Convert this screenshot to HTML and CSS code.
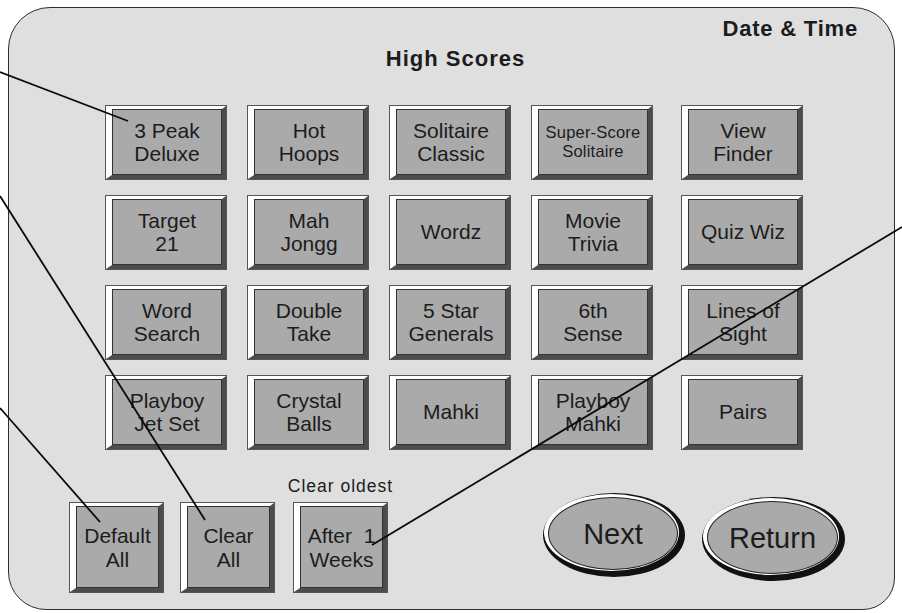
FILE: index.html
```html
<!DOCTYPE html>
<html>
<head>
<meta charset="utf-8">
<title>High Scores</title>
<link rel="stylesheet" href="styles.css">
</head>
<body>
<div class="screen">
  <div class="panel">
    <div class="topbar"><span class="datetime">Date &amp; Time</span></div>
    <div class="title">High Scores</div>
    <div class="grid">
      <div class="key"><div class="face">3 Peak<br>Deluxe</div></div>
      <div class="key"><div class="face">Hot<br>Hoops</div></div>
      <div class="key"><div class="face">Solitaire<br>Classic</div></div>
      <div class="key"><div class="face small">Super-Score<br>Solitaire</div></div>
      <div class="key"><div class="face">View<br>Finder</div></div>

      <div class="key"><div class="face">Target<br>21</div></div>
      <div class="key"><div class="face">Mah<br>Jongg</div></div>
      <div class="key"><div class="face">Wordz</div></div>
      <div class="key"><div class="face">Movie<br>Trivia</div></div>
      <div class="key"><div class="face">Quiz Wiz</div></div>

      <div class="key"><div class="face">Word<br>Search</div></div>
      <div class="key"><div class="face">Double<br>Take</div></div>
      <div class="key"><div class="face">5 Star<br>Generals</div></div>
      <div class="key"><div class="face">6th<br>Sense</div></div>
      <div class="key"><div class="face">Lines of<br>Sight</div></div>

      <div class="key"><div class="face">Playboy<br>Jet Set</div></div>
      <div class="key"><div class="face">Crystal<br>Balls</div></div>
      <div class="key"><div class="face">Mahki</div></div>
      <div class="key"><div class="face">Playboy<br>Mahki</div></div>
      <div class="key"><div class="face">Pairs</div></div>
    </div>
    <div class="bottom">
      <div class="key sq"><div class="face tall">Default<br>All</div></div>
      <div class="key sq"><div class="face tall">Clear<br>All</div></div>
      <div class="labelled">
        <div class="label">Clear oldest</div>
        <div class="key sq"><div class="face tall">After&nbsp;&nbsp;1<br>Weeks</div></div>
      </div>
      <div class="oval next"><div class="ovring"><div class="ovface">Next</div></div></div>
      <div class="oval ret"><div class="ovring"><div class="ovface">Return</div></div></div>
    </div>
  </div>
  <svg class="leaders" width="902" height="613" viewBox="0 0 902 613">
    <line x1="0" y1="72" x2="128" y2="121"/>
    <line x1="0" y1="196" x2="205" y2="520"/>
    <line x1="0" y1="408" x2="100" y2="522"/>
    <line x1="902" y1="227" x2="372" y2="545"/>
  </svg>
</div>
</body>
</html>
```

FILE: styles.css
```css
html, body {
  margin: 0;
  padding: 0;
  background: #ffffff;
}

body {
  font-family: "Liberation Sans", Arial, sans-serif;
  color: #1c1c1c;
}

.screen {
  position: relative;
  width: 902px;
  height: 613px;
  overflow: hidden;
}

.panel {
  box-sizing: border-box;
  margin: 7px 0 0 8px;
  width: 887px;
  height: 603px;
  border: 1.5px solid #2e2e2e;
  border-radius: 42px 42px 32px 38px;
  background: #dfdfdf;
  display: flex;
  flex-direction: column;
}

.topbar {
  display: flex;
  justify-content: flex-end;
  padding: 8px 36px 0 0;
}

.datetime {
  font-weight: bold;
  font-size: 22px;
  line-height: 26px;
  letter-spacing: 0.8px;
}

.title {
  font-weight: bold;
  font-size: 22px;
  line-height: 26px;
  letter-spacing: 1px;
  text-align: center;
  margin: 4px 0 0 8px;
}

.grid {
  display: grid;
  grid-template-columns: 142px 142px 142px 150px 122px;
  grid-auto-rows: 75px;
  row-gap: 15px;
  margin: 33px 0 0 96px;
}

.key {
  box-sizing: border-box;
  width: 122px;
  height: 75px;
  border: 1px solid #555555;
  background: #aaaaaa;
}

.face {
  box-sizing: border-box;
  height: 100%;
  border-style: solid;
  border-width: 3px 4px 4px 6px;
  border-color: #ffffff #4c4c4c #4c4c4c #ffffff;
  box-shadow: inset 0 0 0 1px #333333;
  display: flex;
  align-items: center;
  justify-content: center;
  text-align: center;
  font-size: 21px;
  line-height: 23px;
  padding-bottom: 1px;
}

.face.small {
  font-size: 16.5px;
  line-height: 19px;
  letter-spacing: 0.2px;
}

.bottom {
  display: flex;
  align-items: flex-start;
  margin: 26px 0 0 60px;
}

.key.sq {
  width: 95px;
  height: 91px;
  margin-top: 26px;
  margin-right: 16px;
}

.face.tall {
  line-height: 24px;
  padding-top: 3px;
}

.labelled {
  width: 95px;
  display: flex;
  flex-direction: column;
  align-items: center;
  margin-left: 2px;
}

.labelled .label {
  font-size: 17.5px;
  line-height: 20px;
  letter-spacing: 1px;
  white-space: nowrap;
  margin-bottom: 6px;
}

.labelled .key.sq {
  margin: 0;
}

.oval {
  box-sizing: border-box;
  width: 142px;
  height: 84px;
  border-radius: 50%;
  background: #111111;
  padding: 1px 6px 6px 1px;
}

.oval.next {
  margin: 17px 0 0 155px;
}

.oval.ret {
  width: 143px;
  margin: 21px 0 0 17px;
}

.ovring {
  box-sizing: border-box;
  height: 100%;
  border-radius: 50%;
  background: #ffffff;
  padding: 3px 1px 1px 4px;
}

.ovface {
  box-sizing: border-box;
  height: 100%;
  border-radius: 50%;
  background: #aaaaaa;
  border: 1px solid #222222;
  display: flex;
  align-items: center;
  justify-content: center;
  font-size: 29px;
  line-height: 30px;
}

.leaders {
  position: absolute;
  left: 0;
  top: 0;
  pointer-events: none;
}

.leaders line {
  stroke: #0a0a0a;
  stroke-width: 1.8;
}
```
